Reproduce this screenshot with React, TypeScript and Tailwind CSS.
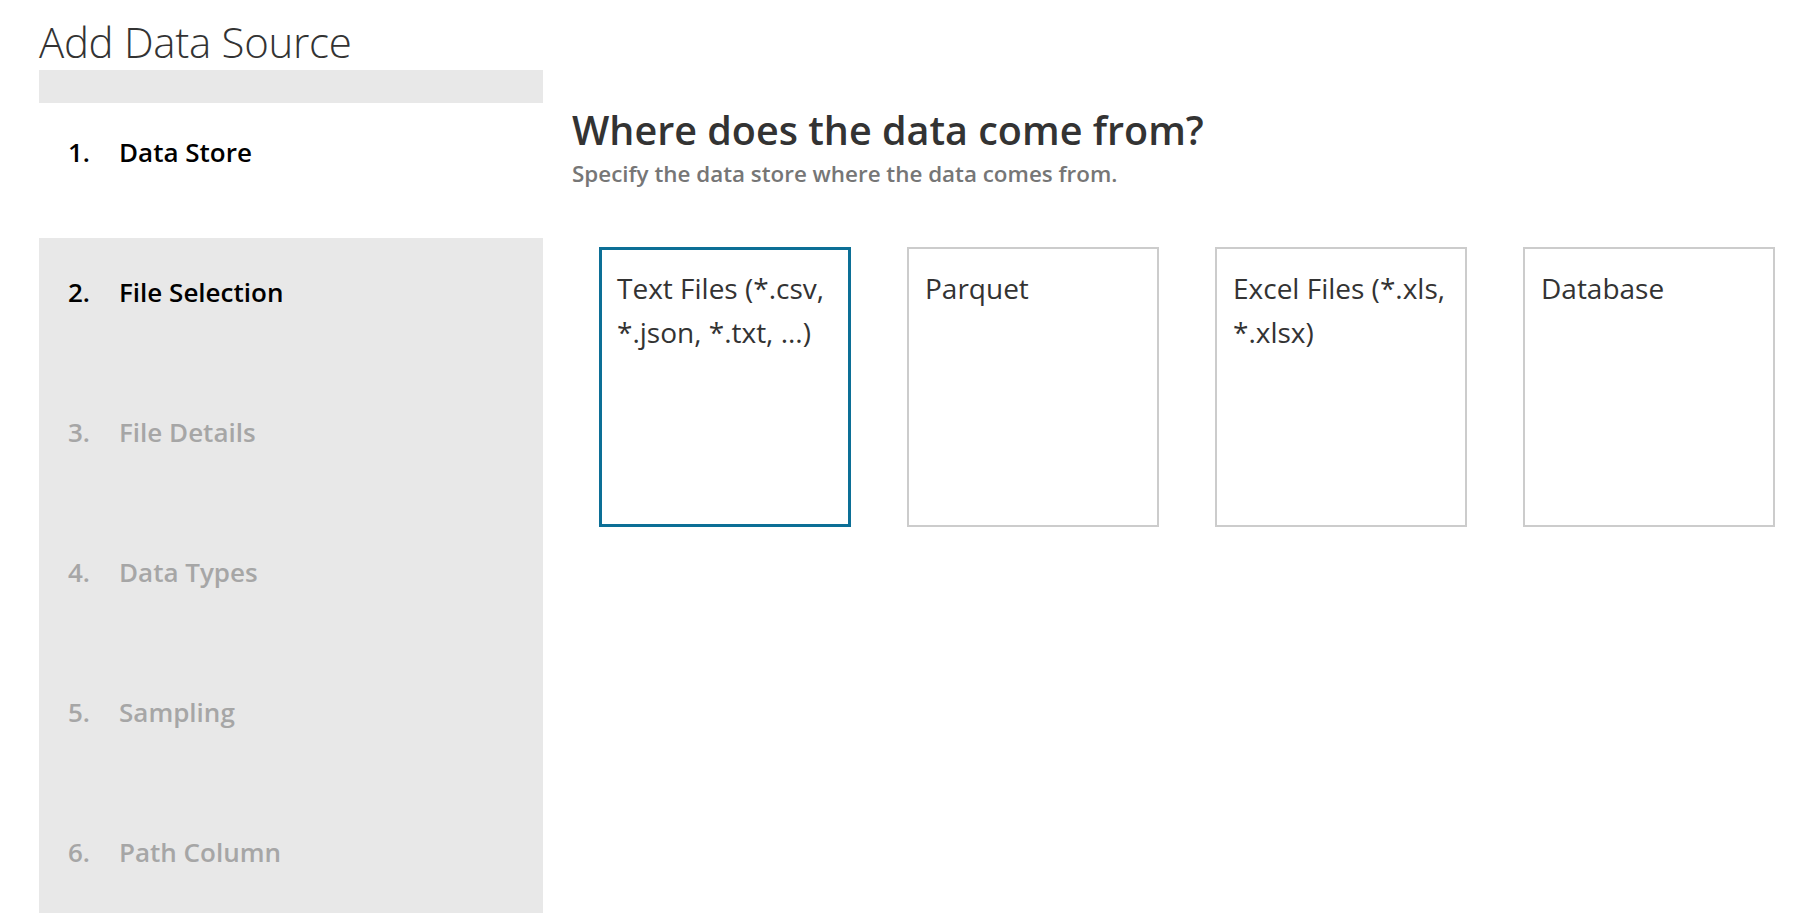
const steps = [
  { n: "1.", label: "Data Store", state: "active" },
  { n: "2.", label: "File Selection", state: "done" },
  { n: "3.", label: "File Details", state: "todo" },
  { n: "4.", label: "Data Types", state: "todo" },
  { n: "5.", label: "Sampling", state: "todo" },
  { n: "6.", label: "Path Column", state: "todo" },
];

const sources = [
  { title: "Text Files (*.csv, *.json, *.txt, ...)", selected: true },
  { title: "Parquet", selected: false },
  { title: "Excel Files (*.xls, *.xlsx)", selected: false },
  { title: "Database", selected: false },
];

function StepItem({ n, label, state }: { n: string; label: string; state: string }) {
  return (
    <div className="h-[140px] shrink-0">
      <div
        className={
          "h-[135px] flex items-start pt-[33px] pl-[29px] text-[26px] leading-[32px] font-semibold " +
          (state === "active" ? "bg-white text-black" : state === "done" ? "text-black" : "text-[#a6a6a6]")
        }
      >
        <span className="w-[51px]">{n}</span>
        <span>{label}</span>
      </div>
    </div>
  );
}

function SourceCard({ title, selected }: { title: string; selected: boolean }) {
  return (
    <div
      className={
        "w-[252px] h-[280px] bg-white pr-[14px] pt-[16px] text-[28px] leading-[44px] text-[#333] " +
        (selected ? "border-[3px] border-[#0c6f96] pl-[15px]" : "border-2 border-[#cccccc] pl-[16px] pt-[17px]")
      }
    >
      {title}
    </div>
  );
}

export default function App() {
  return (
    <div className="h-screen overflow-hidden bg-white flex flex-col pl-[39px] font-['Open_Sans',sans-serif]">
      <h1 className="h-[70px] pt-[16px] text-[42px] leading-[52px] font-light text-[#333] tracking-[-0.3px]">
        Add Data Source
      </h1>
      <div className="flex flex-1 min-h-0">
        <div className="w-[504px] shrink-0 bg-[#e8e8e8] pt-[33px] flex flex-col overflow-hidden">
          {steps.map((s) => (
            <StepItem key={s.n} {...s} />
          ))}
        </div>
        <div className="flex-1 pl-[29px] pt-[35px]">
          <h2 className="text-[39.5px] leading-[50px] font-semibold text-[#333]">Where does the data come from?</h2>
          <p className="mt-[5px] text-[22.4px] leading-[28px] font-semibold text-[#767676]">
            Specify the data store where the data comes from.
          </p>
          <div className="flex gap-[56px] pl-[27px] mt-[59px]">
            {sources.map((s) => (
              <SourceCard key={s.title} {...s} />
            ))}
          </div>
        </div>
      </div>
    </div>
  );
}
